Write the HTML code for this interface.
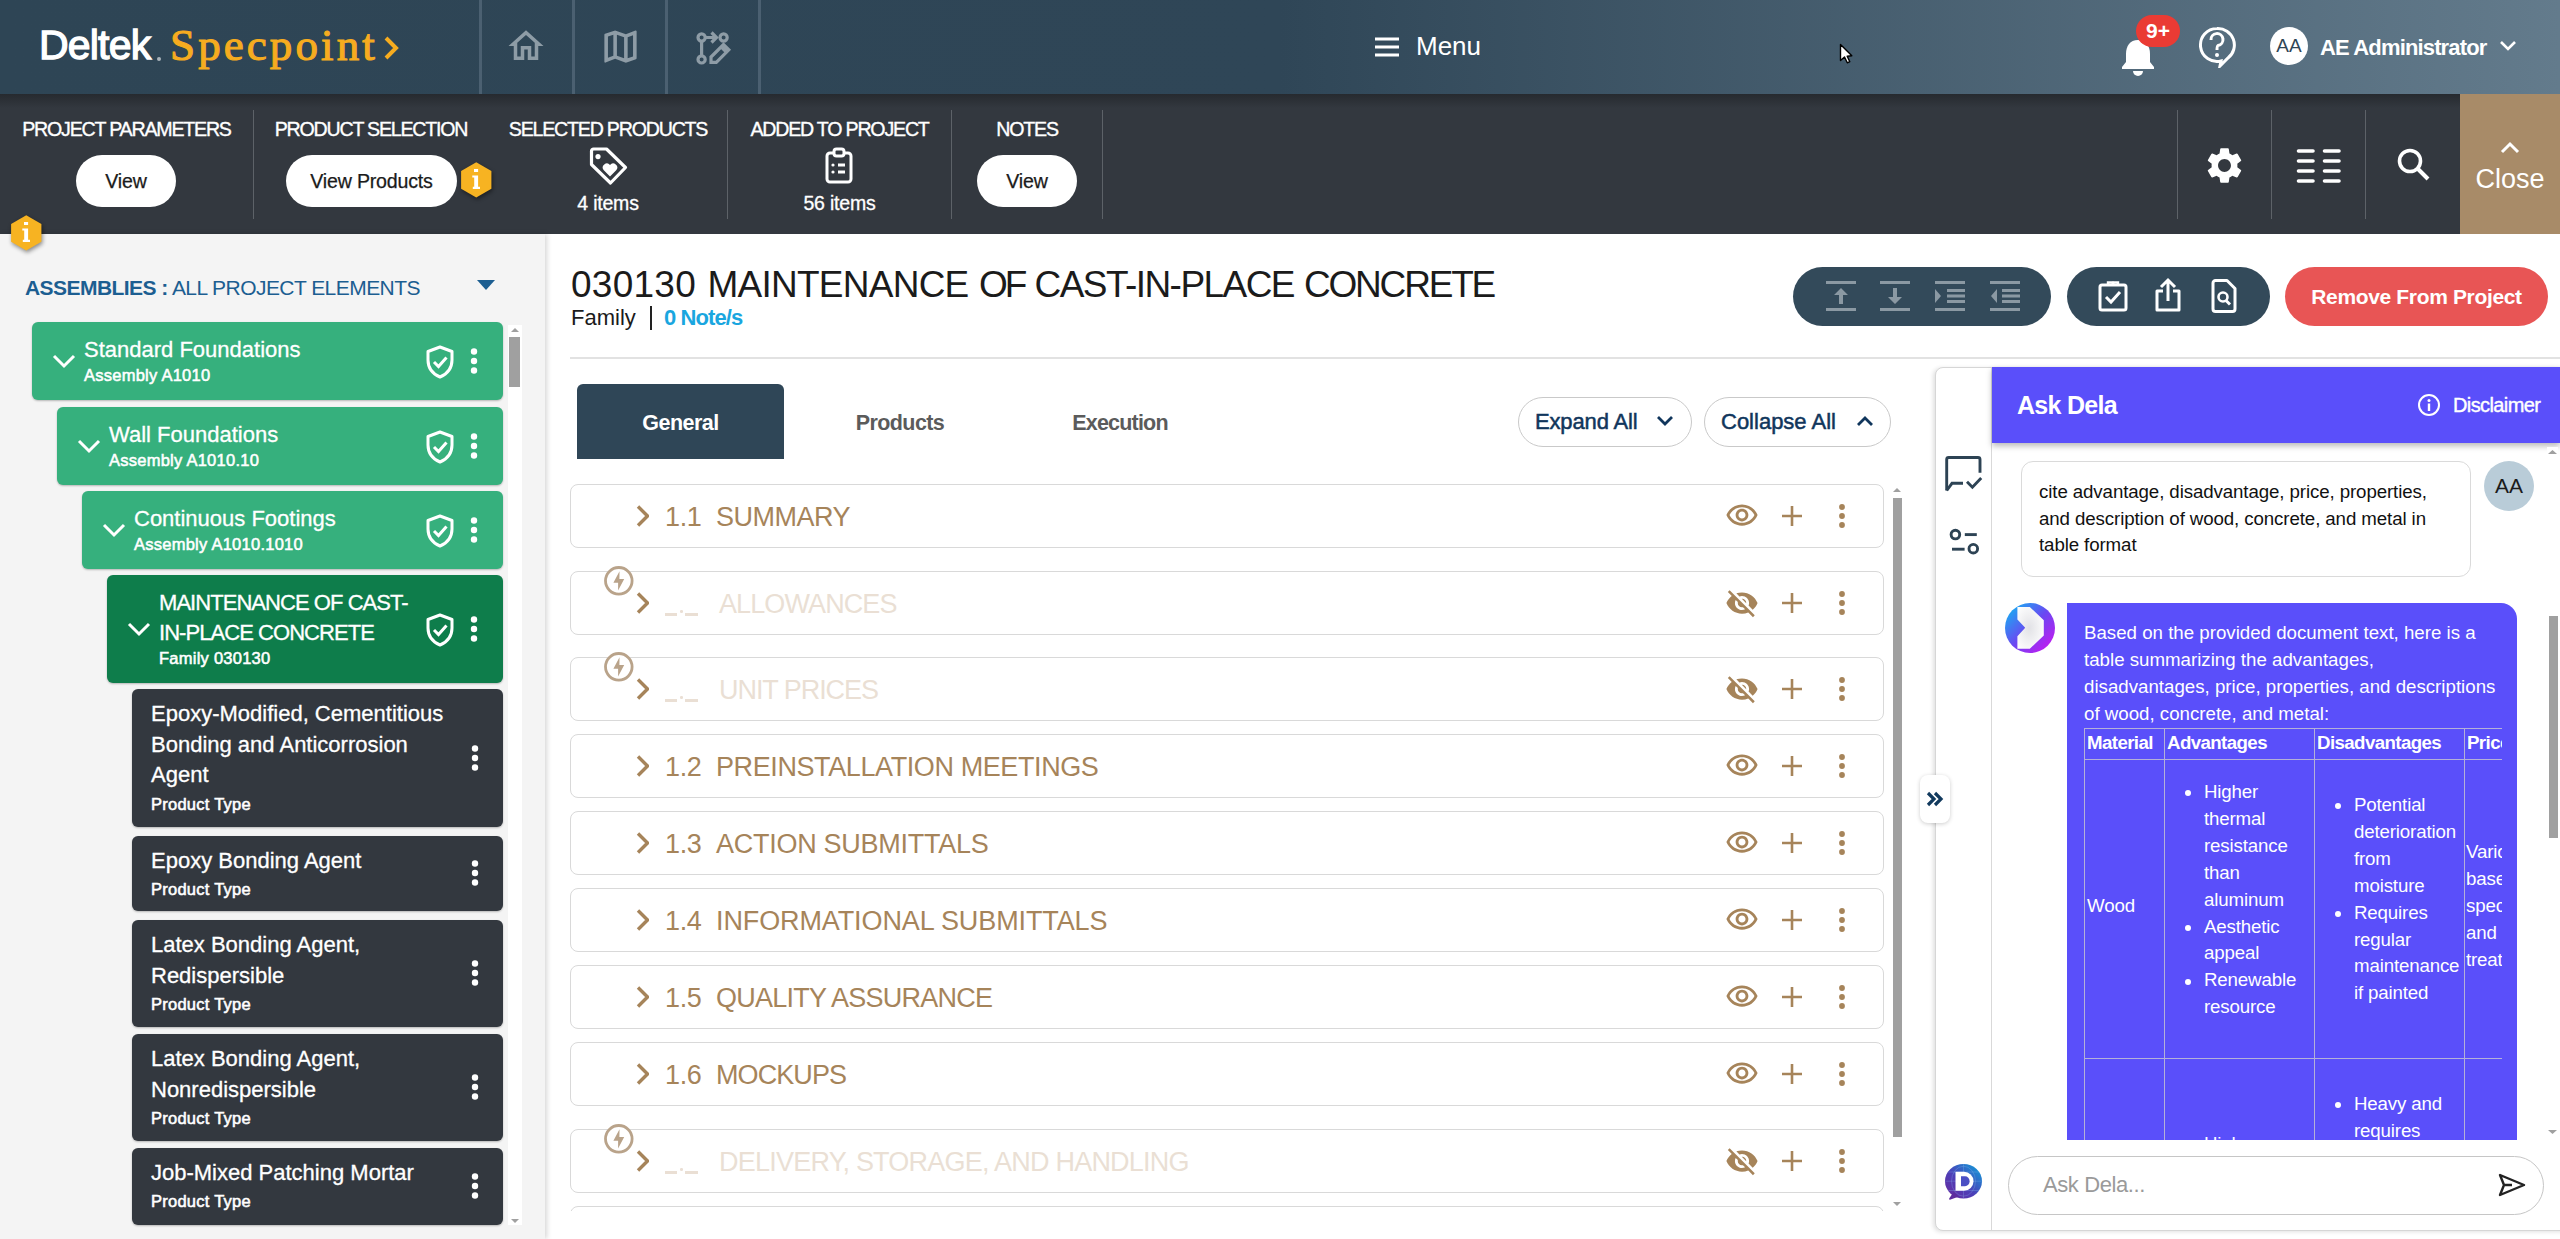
<!DOCTYPE html>
<html><head><meta charset="utf-8">
<style>
*{box-sizing:border-box;margin:0;padding:0}
html,body{width:2560px;height:1239px;overflow:hidden;background:#fff;font-family:"Liberation Sans",sans-serif}
.abs{position:absolute}
#hdr{position:absolute;left:0;top:0;width:2560px;height:94px;background:linear-gradient(90deg,#2e4555 0%,#2f4657 50%,#637b8c 100%)}
#tb{position:absolute;left:0;top:94px;width:2560px;height:140px;background:#33383f}
#tbshadow{position:absolute;left:0;top:94px;width:2460px;height:14px;background:linear-gradient(#262a2f,rgba(51,56,63,0))}
#left{position:absolute;left:0;top:234px;width:545px;height:1005px;background:#f4f4f4;box-shadow:2px 0 5px rgba(0,0,0,.16);z-index:1}
#main{position:absolute;left:545px;top:234px;width:2015px;height:1005px;background:#fff}
.tbl{top:24px;text-align:center;font-size:19.6px;color:#fff;line-height:23px;letter-spacing:-1.2px;-webkit-text-stroke:0.35px #fff}
.tbi{top:98px;text-align:center;font-size:19.5px;color:#fff;line-height:22px;-webkit-text-stroke:0.3px #fff;letter-spacing:-0.2px}
.pill{top:61px;height:52px;border-radius:26px;background:#fff;color:#1b1b1b;font-size:19.6px;text-align:center;line-height:52px;-webkit-text-stroke:0.25px #1b1b1b;letter-spacing:-0.2px}
.vdiv{top:16px;width:1px;height:109px;background:#5d6268}
.card{border-radius:6px;box-shadow:0 1px 2px rgba(0,0,0,.25)}
.ct{font-size:22px;color:#fff;line-height:30px;letter-spacing:0px;-webkit-text-stroke:0.3px #fff}
.ct2{font-size:22px;color:#fff;line-height:30.5px;letter-spacing:0px;-webkit-text-stroke:0.3px #fff}
.cs{font-size:16.5px;color:#fff;line-height:20px;letter-spacing:0.25px;-webkit-text-stroke:0.55px #fff}
.sec{border:1px solid #d9d9d9;border-radius:8px;background:#fff}
.sect{font-size:27px;color:#a6845a;line-height:32px;letter-spacing:-0.38px;white-space:nowrap}
.tab{font-size:21.5px;font-weight:bold;text-align:center;line-height:26px}
.tl{background:#b4b0d8}
.th{font-size:18.7px;font-weight:bold;color:#fff;line-height:26px;letter-spacing:-0.6px;white-space:nowrap}
.td{font-size:18.7px;color:#fff;line-height:26.9px;letter-spacing:-0.15px;white-space:nowrap}
.bul{width:6px;height:6px;border-radius:3px;background:#fff}
.ttl{top:261px;font-size:37px;color:#1b1b1b;line-height:48px;white-space:nowrap}
</style></head>
<body>
<div id="hdr">
 <div class="abs" style="left:39px;top:20px;font-size:41px;color:#fff;letter-spacing:-0.8px;line-height:50px;-webkit-text-stroke:1.3px #fff">Deltek</div>
 <div class="abs" style="left:157px;top:57px;width:4px;height:4px;border-radius:2px;background:#aab4bb"></div>
 <div class="abs" style="left:170px;top:17px;font-family:'Liberation Serif',serif;font-size:45px;color:#f6ac1f;line-height:56px;letter-spacing:3.1px;-webkit-text-stroke:1.1px #f6ac1f">Specpoint</div>
 <svg class="abs" style="left:382px;top:36px" width="18" height="24" viewBox="0 0 18 24"><path d="M4 2 L14 12 L4 22" fill="none" stroke="#f6ac1f" stroke-width="4"/></svg>
 <div class="abs" style="left:479px;top:0;width:2.5px;height:94px;background:#4b6071"></div>
 <div class="abs" style="left:572px;top:0;width:2.5px;height:94px;background:#4b6071"></div>
 <div class="abs" style="left:665px;top:0;width:2.5px;height:94px;background:#4b6071"></div>
 <div class="abs" style="left:758px;top:0;width:2.5px;height:94px;background:#4b6071"></div>
 <svg class="abs" style="left:505px;top:25px" width="42" height="42" viewBox="0 0 24 24"><path fill="#8e9ca6" d="M12 5.69l5 4.5V18h-2v-6H9v6H7v-7.81l5-4.5M12 3L2 12h3v8h6v-6h2v6h6v-8h3L12 3z"/></svg>
 <svg class="abs" style="left:599px;top:25px" width="43" height="43" viewBox="0 0 24 24"><path fill="#8e9ca6" d="M20.5 3l-.16.03L15 5.1 9 3 3.36 4.9c-.21.07-.36.25-.36.48V20.5c0 .28.22.5.5.5l.16-.03L9 18.9l6 2.1 5.640-1.9c.21-.07.36-.25.36-.48V3.5c0-.28-.22-.5-.5-.5zM10 5.47l4 1.4v11.66l-4-1.4V5.47zm-5 .99l3-1.01v11.7l-3 1.16V6.46zm14 11.08l-3 1.01V6.86l3-1.16v11.840z"/></svg>
 <svg class="abs" style="left:690px;top:25px" width="46" height="44" viewBox="0 0 46 44"><g fill="none" stroke="#8e9ca6" stroke-width="3.2"><circle cx="11.6" cy="12.5" r="3.6"/><circle cx="11.6" cy="34.4" r="3.6"/><circle cx="33.6" cy="12.5" r="3.6"/><path d="M11.6 16.2 V30.7 M15.3 12.5 H26 M21.5 7.5 L26.5 12.5 L21.5 17.5"/><path d="M21 37.3 L21 32 L33.5 19.5 L38.8 24.8 L26.3 37.3 Z" stroke-linejoin="miter"/></g><path d="M30 23 L33.5 19.5 L38.8 24.8 L35.3 28.3 Z" fill="#8e9ca6"/></svg>
 <svg class="abs" style="left:1374px;top:37px" width="26" height="20" viewBox="0 0 26 20"><path d="M1 2 H25 M1 10 H25 M1 18 H25" stroke="#fff" stroke-width="3"/></svg>
 <div class="abs" style="left:1416px;top:31px;font-size:26px;color:#fff;line-height:30px">Menu</div>
 <svg class="abs" style="left:1838px;top:42px" width="16" height="24" viewBox="0 0 16 24"><path d="M2.5 2.5 V18.5 L6.5 15 L9.3 20.8 L11.8 19.7 L9.2 14.2 L13.8 13.8 Z" fill="#fff" stroke="#000" stroke-width="1.4" stroke-linejoin="round"/></svg>
 <svg class="abs" style="left:2120px;top:38px" width="36" height="38" viewBox="0 0 36 38"><path d="M18 2 C10 2 6 8 6 16 V24 L2 29 V31 H34 V29 L30 24 V16 C30 8 26 2 18 2 Z" fill="#fff"/><path d="M13 33 A5 5 0 0 0 23 33 Z" fill="#fff"/></svg>
 <div class="abs" style="left:2136px;top:15px;width:44px;height:32px;border-radius:16px;background:#ea3b34;color:#fff;font-size:21px;font-weight:bold;text-align:center;line-height:32px">9+</div>
 <svg class="abs" style="left:2198px;top:26px" width="38" height="42" viewBox="0 0 38 42"><path d="M19 2.5 A16.5 16.5 0 1 0 23 35 L22 40 L30 32 A16.5 16.5 0 0 0 19 2.5 Z" fill="none" stroke="#fff" stroke-width="3"/><path d="M13 14 A6 6 0 1 1 20 19.5 C19 20 19 21 19 24" fill="none" stroke="#fff" stroke-width="3"/><circle cx="19" cy="29" r="2" fill="#fff"/></svg>
 <div class="abs" style="left:2270px;top:27px;width:38px;height:38px;border-radius:19px;background:#fff;color:#2f4656;font-size:19px;text-align:center;line-height:38px">AA</div>
 <div class="abs" style="left:2320px;top:34px;font-size:22px;font-weight:bold;color:#fff;line-height:28px;letter-spacing:-0.85px">AE Administrator</div>
 <svg class="abs" style="left:2499px;top:40px" width="18" height="12" viewBox="0 0 18 12"><path d="M2 2 L9 9 L16 2" fill="none" stroke="#fff" stroke-width="2.6"/></svg>
</div>
<div id="tb">
 <div class="abs tbl" style="left:0;width:253px">PROJECT PARAMETERS</div>
 <div class="abs pill" style="left:76px;width:100px">View</div>
 <div class="abs vdiv" style="left:253px"></div>
 <div class="abs tbl" style="left:254px;width:234px">PRODUCT SELECTION</div>
 <div class="abs pill" style="left:286px;width:171px">View Products</div>
 <svg class="abs" style="left:459px;top:67px;overflow:visible;filter:drop-shadow(1px 2px 2px rgba(0,0,0,.45))" width="35" height="38" viewBox="0 0 35 38"><path d="M17.25 1.3 L32.4 10.05 V27.65 L17.25 36.4 L2.1 27.65 V10.05 Z" fill="#f7b322"/><rect x="15" y="8" width="4.1" height="3" fill="#fff"/><path d="M13.3 14.6 H19.1 V25.7 H21 V28.1 H13.8 V25.7 H15.2 V16.6 H13.3 Z" fill="#fff"/></svg>
 <div class="abs vdiv" style="left:727px"></div>
 <div class="abs tbl" style="left:489px;width:238px">SELECTED PRODUCTS</div>
 <svg class="abs" style="left:588px;top:51px" width="42" height="42" viewBox="0 0 42 42"><path d="M3.5 6 A2 2 0 0 1 5.5 4 H18.5 L37.5 22.5 L22.5 38 L3.5 19.5 Z" fill="none" stroke="#fff" stroke-width="3.2" stroke-linejoin="round"/><circle cx="10" cy="11.6" r="2.6" fill="#fff"/><path d="M22 31.5 L15.8 25.3 A3.7 3.7 0 0 1 22 20 A3.7 3.7 0 0 1 28.2 25.3 Z" fill="#fff"/></svg>
 <div class="abs tbi" style="left:489px;width:238px">4 items</div>
 <div class="abs tbl" style="left:728px;width:223px">ADDED TO PROJECT</div>
 <svg class="abs" style="left:824px;top:53px" width="30" height="38" viewBox="0 0 30 38"><rect x="3" y="6" width="24" height="29" rx="3" fill="none" stroke="#fff" stroke-width="3"/><rect x="10" y="2" width="10" height="7" rx="2.5" fill="#33383f" stroke="#fff" stroke-width="3"/><circle cx="9" cy="18" r="1.6" fill="#fff"/><circle cx="9" cy="25" r="1.6" fill="#fff"/><path d="M14 18 H21 M14 25 H21" stroke="#fff" stroke-width="3"/></svg>
 <div class="abs tbi" style="left:728px;width:223px">56 items</div>
 <div class="abs vdiv" style="left:951px"></div>
 <div class="abs tbl" style="left:952px;width:150px">NOTES</div>
 <div class="abs pill" style="left:977px;width:100px">View</div>
 <div class="abs vdiv" style="left:1102px"></div>
 <div class="abs vdiv" style="left:2177px"></div>
 <div class="abs vdiv" style="left:2271px"></div>
 <div class="abs vdiv" style="left:2365px"></div>
 <svg class="abs" style="left:2203px;top:50px" width="43" height="43" viewBox="0 0 24 24"><path fill="#fff" d="M19.14 12.94c.04-.3.06-.61.06-.94 0-.32-.02-.64-.07-.94l2.03-1.58a.49.49 0 0 0 .12-.61l-1.92-3.32a.49.49 0 0 0-.59-.22l-2.39.96c-.5-.38-1.03-.7-1.62-.94l-.36-2.54a.48.48 0 0 0-.48-.41h-3.84c-.24 0-.43.17-.47.41l-.36 2.54c-.59.24-1.13.57-1.62.94l-2.39-.96a.49.49 0 0 0-.59.22L2.74 8.87c-.12.21-.08.47.12.61l2.03 1.58c-.05.3-.09.63-.09.94s.02.64.07.94l-2.03 1.58a.49.49 0 0 0-.12.61l1.92 3.32c.12.22.37.29.59.22l2.39-.96c.5.38 1.03.7 1.62.94l.36 2.54c.05.24.24.41.48.41h3.84c.24 0 .44-.17.47-.41l.36-2.54c.59-.24 1.13-.56 1.62-.94l2.39.96c.22.08.47 0 .59-.22l1.92-3.32c.12-.22.07-.47-.12-.61l-2.01-1.58zM12 15.6c-1.98 0-3.6-1.62-3.6-3.6s1.62-3.6 3.6-3.6 3.6 1.62 3.6 3.6-1.62 3.6-3.6 3.6z"/></svg>
 <svg class="abs" style="left:2295px;top:54px" width="48" height="38" viewBox="0 0 48 38"><g stroke="#fff" stroke-width="3.6" stroke-linecap="round"><path d="M3.5 3 H18 M3.5 13 H18 M3.5 23 H18 M3.5 33 H18 M29.5 3 H44 M29.5 13 H44 M29.5 23 H44 M29.5 33 H44"/></g></svg>
 <svg class="abs" style="left:2396px;top:53px" width="36" height="36" viewBox="0 0 36 36"><circle cx="14" cy="14" r="10.5" fill="none" stroke="#fff" stroke-width="3.6"/><path d="M21.5 21.5 L32 32" stroke="#fff" stroke-width="4"/></svg>
 <div class="abs" style="left:2460px;top:0;width:100px;height:140px;background:#a88b68"></div>
 <svg class="abs" style="left:2499px;top:47px" width="22" height="14" viewBox="0 0 22 14"><path d="M3 11 L11 3 L19 11" fill="none" stroke="#fff" stroke-width="3"/></svg>
 <div class="abs" style="left:2460px;top:69px;width:100px;text-align:center;font-size:27px;color:#fff;line-height:32px">Close</div>
</div>
<div id="tbshadow"></div>
<div id="left">
 <svg class="abs" style="left:9px;top:-20px;overflow:visible;filter:drop-shadow(1px 2px 2px rgba(0,0,0,.45))" width="35" height="38" viewBox="0 0 35 38"><path d="M17.25 1.3 L32.4 10.05 V27.65 L17.25 36.4 L2.1 27.65 V10.05 Z" fill="#f7b322"/><rect x="15" y="8" width="4.1" height="3" fill="#fff"/><path d="M13.3 14.6 H19.1 V25.7 H21 V28.1 H13.8 V25.7 H15.2 V16.6 H13.3 Z" fill="#fff"/></svg>
 <div class="abs" style="left:25px;top:42px;font-size:21px;color:#1c5e91;line-height:24px;letter-spacing:-0.55px"><b>ASSEMBLIES :</b> ALL PROJECT ELEMENTS</div>
 <svg class="abs" style="left:477px;top:46px" width="18" height="11" viewBox="0 0 18 11"><path d="M0 0 H18 L9 10 Z" fill="#1c5e91"/></svg>
 <div class="abs" style="left:508px;top:91px;width:14px;height:900px;background:#fff"></div>
 <svg class="abs" style="left:510px;top:93px" width="10" height="6" viewBox="0 0 10 6"><path d="M1 5 L5 1 L9 5Z" fill="#a0a0a0"/></svg>
 <div class="abs" style="left:509px;top:103px;width:11px;height:50px;background:#a0a0a0"></div>
 <svg class="abs" style="left:510px;top:984px" width="10" height="6" viewBox="0 0 10 6"><path d="M1 1 L5 5 L9 1Z" fill="#a0a0a0"/></svg>
<div class="abs card" style="left:32px;top:88px;width:471px;height:78px;background:#36b07d"><svg class="abs" style="left:19px;top:31px" width="26" height="16" viewBox="0 0 26 16"><path d="M3 3 L13 13 L23 3" fill="none" stroke="#fff" stroke-width="3"/></svg><div class="abs ct" style="left:52px;top:13px">Standard Foundations</div><div class="abs cs" style="left:52px;top:43px">Assembly A1010</div><svg class="abs" style="left:393px;top:23px" width="30" height="34" viewBox="0 0 30 34"><path d="M15 2 L27 6.5 V15 C27 23 22 29 15 32 C8 29 3 23 3 15 V6.5 Z" fill="none" stroke="#fff" stroke-width="3" stroke-linejoin="round"/><path d="M9 17 L13.5 21.5 L21.5 12.5" fill="none" stroke="#fff" stroke-width="3"/></svg><svg class="abs" style="left:438px;top:26px" width="8" height="26" viewBox="0 0 8 26"><circle cx="4" cy="3.5" r="3.2" fill="#fff"/><circle cx="4" cy="13" r="3.2" fill="#fff"/><circle cx="4" cy="22.5" r="3.2" fill="#fff"/></svg></div><div class="abs card" style="left:57px;top:173px;width:446px;height:78px;background:#36b07d"><svg class="abs" style="left:19px;top:31px" width="26" height="16" viewBox="0 0 26 16"><path d="M3 3 L13 13 L23 3" fill="none" stroke="#fff" stroke-width="3"/></svg><div class="abs ct" style="left:52px;top:13px">Wall Foundations</div><div class="abs cs" style="left:52px;top:43px">Assembly A1010.10</div><svg class="abs" style="left:368px;top:23px" width="30" height="34" viewBox="0 0 30 34"><path d="M15 2 L27 6.5 V15 C27 23 22 29 15 32 C8 29 3 23 3 15 V6.5 Z" fill="none" stroke="#fff" stroke-width="3" stroke-linejoin="round"/><path d="M9 17 L13.5 21.5 L21.5 12.5" fill="none" stroke="#fff" stroke-width="3"/></svg><svg class="abs" style="left:413px;top:26px" width="8" height="26" viewBox="0 0 8 26"><circle cx="4" cy="3.5" r="3.2" fill="#fff"/><circle cx="4" cy="13" r="3.2" fill="#fff"/><circle cx="4" cy="22.5" r="3.2" fill="#fff"/></svg></div><div class="abs card" style="left:82px;top:257px;width:421px;height:78px;background:#36b07d"><svg class="abs" style="left:19px;top:31px" width="26" height="16" viewBox="0 0 26 16"><path d="M3 3 L13 13 L23 3" fill="none" stroke="#fff" stroke-width="3"/></svg><div class="abs ct" style="left:52px;top:13px">Continuous Footings</div><div class="abs cs" style="left:52px;top:43px">Assembly A1010.1010</div><svg class="abs" style="left:343px;top:23px" width="30" height="34" viewBox="0 0 30 34"><path d="M15 2 L27 6.5 V15 C27 23 22 29 15 32 C8 29 3 23 3 15 V6.5 Z" fill="none" stroke="#fff" stroke-width="3" stroke-linejoin="round"/><path d="M9 17 L13.5 21.5 L21.5 12.5" fill="none" stroke="#fff" stroke-width="3"/></svg><svg class="abs" style="left:388px;top:26px" width="8" height="26" viewBox="0 0 8 26"><circle cx="4" cy="3.5" r="3.2" fill="#fff"/><circle cx="4" cy="13" r="3.2" fill="#fff"/><circle cx="4" cy="22.5" r="3.2" fill="#fff"/></svg></div><div class="abs card" style="left:107px;top:341px;width:396px;height:108px;background:#0e7d4b"><svg class="abs" style="left:19px;top:46px" width="26" height="16" viewBox="0 0 26 16"><path d="M3 3 L13 13 L23 3" fill="none" stroke="#fff" stroke-width="3"/></svg><div class="abs ct" style="left:52px;top:13px"><span style="letter-spacing:-0.95px">MAINTENANCE OF CAST-<br>IN-PLACE CONCRETE</span></div><div class="abs cs" style="left:52px;top:73px">Family 030130</div><svg class="abs" style="left:318px;top:38px" width="30" height="34" viewBox="0 0 30 34"><path d="M15 2 L27 6.5 V15 C27 23 22 29 15 32 C8 29 3 23 3 15 V6.5 Z" fill="none" stroke="#fff" stroke-width="3" stroke-linejoin="round"/><path d="M9 17 L13.5 21.5 L21.5 12.5" fill="none" stroke="#fff" stroke-width="3"/></svg><svg class="abs" style="left:363px;top:41px" width="8" height="26" viewBox="0 0 8 26"><circle cx="4" cy="3.5" r="3.2" fill="#fff"/><circle cx="4" cy="13" r="3.2" fill="#fff"/><circle cx="4" cy="22.5" r="3.2" fill="#fff"/></svg></div><div class="abs card" style="left:132px;top:455px;width:371px;height:138px;background:#33383f"><div class="abs ct2" style="left:19px;top:10px;width:320px">Epoxy-Modified, Cementitious<br>Bonding and Anticorrosion<br>Agent</div><div class="abs cs" style="left:19px;top:105px">Product Type</div><svg class="abs" style="left:339px;top:56px" width="8" height="26" viewBox="0 0 8 26"><circle cx="4" cy="3.5" r="3.2" fill="#fff"/><circle cx="4" cy="13" r="3.2" fill="#fff"/><circle cx="4" cy="22.5" r="3.2" fill="#fff"/></svg></div><div class="abs card" style="left:132px;top:602px;width:371px;height:75px;background:#33383f"><div class="abs ct2" style="left:19px;top:10px;width:320px">Epoxy Bonding Agent</div><div class="abs cs" style="left:19px;top:43px">Product Type</div><svg class="abs" style="left:339px;top:24px" width="8" height="26" viewBox="0 0 8 26"><circle cx="4" cy="3.5" r="3.2" fill="#fff"/><circle cx="4" cy="13" r="3.2" fill="#fff"/><circle cx="4" cy="22.5" r="3.2" fill="#fff"/></svg></div><div class="abs card" style="left:132px;top:686px;width:371px;height:107px;background:#33383f"><div class="abs ct2" style="left:19px;top:10px;width:320px">Latex Bonding Agent,<br>Redispersible</div><div class="abs cs" style="left:19px;top:74px">Product Type</div><svg class="abs" style="left:339px;top:40px" width="8" height="26" viewBox="0 0 8 26"><circle cx="4" cy="3.5" r="3.2" fill="#fff"/><circle cx="4" cy="13" r="3.2" fill="#fff"/><circle cx="4" cy="22.5" r="3.2" fill="#fff"/></svg></div><div class="abs card" style="left:132px;top:800px;width:371px;height:107px;background:#33383f"><div class="abs ct2" style="left:19px;top:10px;width:320px">Latex Bonding Agent,<br>Nonredispersible</div><div class="abs cs" style="left:19px;top:74px">Product Type</div><svg class="abs" style="left:339px;top:40px" width="8" height="26" viewBox="0 0 8 26"><circle cx="4" cy="3.5" r="3.2" fill="#fff"/><circle cx="4" cy="13" r="3.2" fill="#fff"/><circle cx="4" cy="22.5" r="3.2" fill="#fff"/></svg></div><div class="abs card" style="left:132px;top:914px;width:371px;height:77px;background:#33383f"><div class="abs ct2" style="left:19px;top:10px;width:320px">Job-Mixed Patching Mortar</div><div class="abs cs" style="left:19px;top:43px">Product Type</div><svg class="abs" style="left:339px;top:25px" width="8" height="26" viewBox="0 0 8 26"><circle cx="4" cy="3.5" r="3.2" fill="#fff"/><circle cx="4" cy="13" r="3.2" fill="#fff"/><circle cx="4" cy="22.5" r="3.2" fill="#fff"/></svg></div></div>
<div id="main"></div>
<div id="mainc">
 <div class="abs ttl" style="left:571px;letter-spacing:0.25px">030130</div><div class="abs ttl" style="left:707.5px;letter-spacing:-0.75px">MAINTENANCE</div><div class="abs ttl" style="left:979px;letter-spacing:-3px">OF</div><div class="abs ttl" style="left:1034.5px;letter-spacing:-1.55px">CAST-IN-PLACE</div><div class="abs ttl" style="left:1304px;letter-spacing:-2.2px">CONCRETE</div>
 <div class="abs" style="left:571px;top:305px;font-size:22px;color:#1b1b1b;line-height:26px">Family</div>
 <div class="abs" style="left:650px;top:306px;width:1.5px;height:24px;background:#222"></div>
 <div class="abs" style="left:664px;top:305px;font-size:22px;font-weight:bold;color:#1aa6df;line-height:26px;letter-spacing:-0.9px">0 Note/s</div>
 <div class="abs" style="left:570px;top:357px;width:1990px;height:2px;background:#e2e2e2"></div>
 <div class="abs" style="left:1793px;top:267px;width:258px;height:59px;border-radius:30px;background:#334a5a"></div>
 <div class="abs" style="left:2067px;top:267px;width:203px;height:59px;border-radius:30px;background:#334a5a"></div>
 <div class="abs" style="left:2285px;top:267px;width:263px;height:59px;border-radius:30px;background:#e85555;color:#fff;font-size:21px;font-weight:bold;text-align:center;line-height:59px;letter-spacing:-0.35px">Remove From Project</div>
 <svg class="abs" style="left:1825px;top:280px" width="32" height="32" viewBox="0 0 32 32"><g fill="#8b99a3"><rect x="1" y="1" width="30" height="3"/><rect x="1" y="28" width="30" height="3"/><path d="M16 8 L23 15 H18 V24 H14 V15 H9 Z"/></g></svg>
 <svg class="abs" style="left:1879px;top:280px" width="32" height="32" viewBox="0 0 32 32"><g fill="#8b99a3"><rect x="1" y="1" width="30" height="3"/><rect x="1" y="28" width="30" height="3"/><path d="M16 24 L23 17 H18 V8 H14 V17 H9 Z"/></g></svg>
 <svg class="abs" style="left:1934px;top:280px" width="32" height="32" viewBox="0 0 32 32"><g fill="#8b99a3"><rect x="1" y="1" width="30" height="3"/><rect x="1" y="28" width="30" height="3"/><rect x="13" y="9" width="18" height="3"/><rect x="13" y="14.5" width="18" height="3"/><rect x="13" y="20" width="18" height="3"/><path d="M1 9 L7 16 L1 23 Z"/></g></svg>
 <svg class="abs" style="left:1989px;top:280px" width="32" height="32" viewBox="0 0 32 32"><g fill="#8b99a3"><rect x="1" y="1" width="30" height="3"/><rect x="1" y="28" width="30" height="3"/><rect x="13" y="9" width="18" height="3"/><rect x="13" y="14.5" width="18" height="3"/><rect x="13" y="20" width="18" height="3"/><path d="M8 9 L2 16 L8 23 Z"/></g></svg>
 <svg class="abs" style="left:2098px;top:280px" width="30" height="32" viewBox="0 0 30 32"><rect x="2" y="5" width="26" height="25" rx="2" fill="none" stroke="#fff" stroke-width="3"/><path d="M10 5 V2.5 H20 V5" fill="none" stroke="#fff" stroke-width="2.4"/><circle cx="15" cy="3" r="1.6" fill="#fff"/><path d="M8 17 L13 22 L22 12" fill="none" stroke="#fff" stroke-width="3"/></svg>
 <svg class="abs" style="left:2154px;top:277px" width="28" height="35" viewBox="0 0 28 35"><path d="M9 14 H3 V33 H25 V14 H19" fill="none" stroke="#fff" stroke-width="3" stroke-linejoin="round"/><path d="M14 24 V3 M7 10 L14 3 L21 10" fill="none" stroke="#fff" stroke-width="3"/></svg>
 <svg class="abs" style="left:2210px;top:279px" width="28" height="34" viewBox="0 0 28 34"><path d="M3 4 A2.5 2.5 0 0 1 5.5 1.5 H17 L25 9.5 V30 A2.5 2.5 0 0 1 22.5 32.5 H5.5 A2.5 2.5 0 0 1 3 30 Z" fill="none" stroke="#fff" stroke-width="3" stroke-linejoin="round"/><circle cx="13" cy="18" r="4.5" fill="none" stroke="#fff" stroke-width="2.6"/><path d="M16 21.5 L20 25.5" stroke="#fff" stroke-width="3"/></svg>
 <div class="abs" style="left:577px;top:384px;width:207px;height:75px;border-radius:6px 6px 0 0;background:#2f4657"></div>
 <div class="abs tab" style="left:577px;top:410px;width:207px;color:#fff;letter-spacing:-0.5px">General</div>
 <div class="abs tab" style="left:800px;top:410px;width:200px;color:#5b5b5b;letter-spacing:-0.6px">Products</div>
 <div class="abs tab" style="left:1020px;top:410px;width:200px;color:#5b5b5b;letter-spacing:-0.8px">Execution</div>
 <div class="abs" style="left:1518px;top:397px;width:174px;height:50px;border-radius:25px;border:1px solid #c9c9c9"></div>
 <div class="abs" style="left:1535px;top:409px;font-size:22px;color:#10365c;line-height:26px;letter-spacing:-0.15px;-webkit-text-stroke:0.5px #10365c">Expand All</div>
 <svg class="abs" style="left:1656px;top:415px" width="18" height="12" viewBox="0 0 18 12"><path d="M2 2 L9 9 L16 2" fill="none" stroke="#10365c" stroke-width="2.8"/></svg>
 <div class="abs" style="left:1704px;top:397px;width:187px;height:50px;border-radius:25px;border:1px solid #c9c9c9"></div>
 <div class="abs" style="left:1721px;top:409px;font-size:22px;color:#10365c;line-height:26px;letter-spacing:0px;-webkit-text-stroke:0.5px #10365c">Collapse All</div>
 <svg class="abs" style="left:1856px;top:415px" width="18" height="12" viewBox="0 0 18 12"><path d="M2 10 L9 3 L16 10" fill="none" stroke="#10365c" stroke-width="2.8"/></svg>
<div class="abs" style="left:0;top:0;width:1920px;height:1211px;overflow:hidden"><div class="abs sec" style="left:570px;top:484px;width:1314px;height:64px"></div><svg class="abs" style="left:635px;top:504px" width="14" height="24" viewBox="0 0 14 24"><path d="M3 2.5 L12.5 12 L3 21.5" fill="none" stroke="#a6845a" stroke-width="3.4"/></svg><div class="abs sect" style="left:665px;top:501px">1.1</div><div class="abs sect" style="left:716px;top:501px;letter-spacing:-0.50px">SUMMARY</div><svg class="abs" style="left:1725px;top:498px" width="34" height="34" viewBox="0 0 24 24"><path fill="#a6845a" d="M12 6.5c3.79 0 7.17 2.13 8.82 5.5-1.65 3.37-5.02 5.5-8.82 5.5S4.83 15.37 3.18 12C4.830 8.63 8.21 6.5 12 6.5m0-2C7 4.5 2.73 7.61 1 12c1.73 4.39 6 7.5 11 7.5s9.27-3.11 11-7.5c-1.73-4.39-6-7.5-11-7.5zm0 5c1.38 0 2.5 1.12 2.5 2.5s-1.12 2.5-2.5 2.5-2.5-1.12-2.5-2.5 1.12-2.5 2.5-2.5m0-2c-2.48 0-4.5 2.02-4.5 4.5s2.02 4.5 4.5 4.5 4.5-2.02 4.5-4.5-2.02-4.5-4.5-4.5z"/></svg><svg class="abs" style="left:1781px;top:505px" width="22" height="22" viewBox="0 0 22 22"><path d="M11 1 V21 M1 11 H21" stroke="#a6845a" stroke-width="2.6"/></svg><svg class="abs" style="left:1838px;top:504px" width="8" height="24" viewBox="0 0 8 24"><circle cx="4" cy="3" r="2.9" fill="#a6845a"/><circle cx="4" cy="12" r="2.9" fill="#a6845a"/><circle cx="4" cy="21" r="2.9" fill="#a6845a"/></svg><div class="abs sec" style="left:570px;top:571px;width:1314px;height:64px"></div><svg class="abs" style="left:635px;top:591px" width="14" height="24" viewBox="0 0 14 24"><path d="M3 2.5 L12.5 12 L3 21.5" fill="none" stroke="#a6845a" stroke-width="3.4"/></svg><div class="abs" style="left:665px;top:613px;width:12px;height:2.5px;background:#eadfd4"></div><div class="abs" style="left:680px;top:610px;width:2.6px;height:2.6px;border-radius:1.3px;background:#eadfd4"></div><div class="abs" style="left:685px;top:613px;width:13px;height:2.5px;background:#eadfd4"></div><div class="abs sect" style="left:719px;top:588px;color:#eadfd4;letter-spacing:-0.90px">ALLOWANCES</div><svg class="abs" style="left:603px;top:564px" width="32" height="32" viewBox="0 0 32 32"><circle cx="15.8" cy="16.8" r="13.3" fill="#fff" stroke="#b9a38a" stroke-width="2.8"/><path d="M16.5 7.2 L10.4 18.8 H15.1 V26.4 L21.2 15.1 H16.4 Z" fill="#b9a38a"/></svg><svg class="abs" style="left:1725px;top:586px" width="34" height="34" viewBox="0 0 24 24"><path fill="#a6845a" d="M12 7c2.76 0 5 2.24 5 5 0 .65-.13 1.26-.36 1.83l2.92 2.920c1.51-1.26 2.7-2.89 3.43-4.75-1.73-4.39-6-7.5-11-7.5-1.4 0-2.74.25-3.98.7l2.160 2.160C10.74 7.13 11.35 7 12 7zM2 4.27l2.28 2.280.46.46C3.08 8.3 1.78 10.02 1 12c1.73 4.39 6 7.5 11 7.5 1.55 0 3.03-.3 4.38-.84l.42.42L19.73 22 21 20.73 3.27 3 2 4.27zM7.53 9.8l1.55 1.55c-.05.21-.08.43-.08.65 0 1.66 1.34 3 3 3 .22 0 .44-.03.65-.08l1.55 1.55c-.67.33-1.41.53-2.2.53-2.76 0-5-2.240-5-5 0-.79.2-1.53.53-2.2zm4.31-.78l3.15 3.15.02-.16c0-1.66-1.34-3-3-3l-.17.01z"/></svg><svg class="abs" style="left:1781px;top:592px" width="22" height="22" viewBox="0 0 22 22"><path d="M11 1 V21 M1 11 H21" stroke="#a6845a" stroke-width="2.6"/></svg><svg class="abs" style="left:1838px;top:591px" width="8" height="24" viewBox="0 0 8 24"><circle cx="4" cy="3" r="2.9" fill="#a6845a"/><circle cx="4" cy="12" r="2.9" fill="#a6845a"/><circle cx="4" cy="21" r="2.9" fill="#a6845a"/></svg><div class="abs sec" style="left:570px;top:657px;width:1314px;height:64px"></div><svg class="abs" style="left:635px;top:677px" width="14" height="24" viewBox="0 0 14 24"><path d="M3 2.5 L12.5 12 L3 21.5" fill="none" stroke="#a6845a" stroke-width="3.4"/></svg><div class="abs" style="left:665px;top:699px;width:12px;height:2.5px;background:#eadfd4"></div><div class="abs" style="left:680px;top:696px;width:2.6px;height:2.6px;border-radius:1.3px;background:#eadfd4"></div><div class="abs" style="left:685px;top:699px;width:13px;height:2.5px;background:#eadfd4"></div><div class="abs sect" style="left:719px;top:674px;color:#eadfd4;letter-spacing:-1.05px">UNIT PRICES</div><svg class="abs" style="left:603px;top:650px" width="32" height="32" viewBox="0 0 32 32"><circle cx="15.8" cy="16.8" r="13.3" fill="#fff" stroke="#b9a38a" stroke-width="2.8"/><path d="M16.5 7.2 L10.4 18.8 H15.1 V26.4 L21.2 15.1 H16.4 Z" fill="#b9a38a"/></svg><svg class="abs" style="left:1725px;top:672px" width="34" height="34" viewBox="0 0 24 24"><path fill="#a6845a" d="M12 7c2.76 0 5 2.24 5 5 0 .65-.13 1.26-.36 1.83l2.92 2.920c1.51-1.26 2.7-2.89 3.43-4.75-1.73-4.39-6-7.5-11-7.5-1.4 0-2.74.25-3.98.7l2.160 2.160C10.74 7.13 11.35 7 12 7zM2 4.27l2.28 2.280.46.46C3.08 8.3 1.78 10.02 1 12c1.73 4.39 6 7.5 11 7.5 1.55 0 3.03-.3 4.38-.84l.42.42L19.73 22 21 20.73 3.27 3 2 4.27zM7.53 9.8l1.55 1.55c-.05.21-.08.43-.08.65 0 1.66 1.34 3 3 3 .22 0 .44-.03.65-.08l1.55 1.55c-.67.33-1.41.53-2.2.53-2.76 0-5-2.240-5-5 0-.79.2-1.53.53-2.2zm4.31-.78l3.15 3.15.02-.16c0-1.66-1.34-3-3-3l-.17.01z"/></svg><svg class="abs" style="left:1781px;top:678px" width="22" height="22" viewBox="0 0 22 22"><path d="M11 1 V21 M1 11 H21" stroke="#a6845a" stroke-width="2.6"/></svg><svg class="abs" style="left:1838px;top:677px" width="8" height="24" viewBox="0 0 8 24"><circle cx="4" cy="3" r="2.9" fill="#a6845a"/><circle cx="4" cy="12" r="2.9" fill="#a6845a"/><circle cx="4" cy="21" r="2.9" fill="#a6845a"/></svg><div class="abs sec" style="left:570px;top:734px;width:1314px;height:64px"></div><svg class="abs" style="left:635px;top:754px" width="14" height="24" viewBox="0 0 14 24"><path d="M3 2.5 L12.5 12 L3 21.5" fill="none" stroke="#a6845a" stroke-width="3.4"/></svg><div class="abs sect" style="left:665px;top:751px">1.2</div><div class="abs sect" style="left:716px;top:751px;letter-spacing:-0.40px">PREINSTALLATION MEETINGS</div><svg class="abs" style="left:1725px;top:748px" width="34" height="34" viewBox="0 0 24 24"><path fill="#a6845a" d="M12 6.5c3.79 0 7.17 2.13 8.82 5.5-1.65 3.37-5.02 5.5-8.82 5.5S4.83 15.37 3.18 12C4.830 8.63 8.21 6.5 12 6.5m0-2C7 4.5 2.73 7.61 1 12c1.73 4.39 6 7.5 11 7.5s9.27-3.11 11-7.5c-1.73-4.39-6-7.5-11-7.5zm0 5c1.38 0 2.5 1.12 2.5 2.5s-1.12 2.5-2.5 2.5-2.5-1.12-2.5-2.5 1.12-2.5 2.5-2.5m0-2c-2.48 0-4.5 2.02-4.5 4.5s2.02 4.5 4.5 4.5 4.5-2.02 4.5-4.5-2.02-4.5-4.5-4.5z"/></svg><svg class="abs" style="left:1781px;top:755px" width="22" height="22" viewBox="0 0 22 22"><path d="M11 1 V21 M1 11 H21" stroke="#a6845a" stroke-width="2.6"/></svg><svg class="abs" style="left:1838px;top:754px" width="8" height="24" viewBox="0 0 8 24"><circle cx="4" cy="3" r="2.9" fill="#a6845a"/><circle cx="4" cy="12" r="2.9" fill="#a6845a"/><circle cx="4" cy="21" r="2.9" fill="#a6845a"/></svg><div class="abs sec" style="left:570px;top:811px;width:1314px;height:64px"></div><svg class="abs" style="left:635px;top:831px" width="14" height="24" viewBox="0 0 14 24"><path d="M3 2.5 L12.5 12 L3 21.5" fill="none" stroke="#a6845a" stroke-width="3.4"/></svg><div class="abs sect" style="left:665px;top:828px">1.3</div><div class="abs sect" style="left:716px;top:828px;letter-spacing:-0.27px">ACTION SUBMITTALS</div><svg class="abs" style="left:1725px;top:825px" width="34" height="34" viewBox="0 0 24 24"><path fill="#a6845a" d="M12 6.5c3.79 0 7.17 2.13 8.82 5.5-1.65 3.37-5.02 5.5-8.82 5.5S4.83 15.37 3.18 12C4.830 8.63 8.21 6.5 12 6.5m0-2C7 4.5 2.73 7.61 1 12c1.73 4.39 6 7.5 11 7.5s9.27-3.11 11-7.5c-1.73-4.39-6-7.5-11-7.5zm0 5c1.38 0 2.5 1.12 2.5 2.5s-1.12 2.5-2.5 2.5-2.5-1.12-2.5-2.5 1.12-2.5 2.5-2.5m0-2c-2.48 0-4.5 2.02-4.5 4.5s2.02 4.5 4.5 4.5 4.5-2.02 4.5-4.5-2.02-4.5-4.5-4.5z"/></svg><svg class="abs" style="left:1781px;top:832px" width="22" height="22" viewBox="0 0 22 22"><path d="M11 1 V21 M1 11 H21" stroke="#a6845a" stroke-width="2.6"/></svg><svg class="abs" style="left:1838px;top:831px" width="8" height="24" viewBox="0 0 8 24"><circle cx="4" cy="3" r="2.9" fill="#a6845a"/><circle cx="4" cy="12" r="2.9" fill="#a6845a"/><circle cx="4" cy="21" r="2.9" fill="#a6845a"/></svg><div class="abs sec" style="left:570px;top:888px;width:1314px;height:64px"></div><svg class="abs" style="left:635px;top:908px" width="14" height="24" viewBox="0 0 14 24"><path d="M3 2.5 L12.5 12 L3 21.5" fill="none" stroke="#a6845a" stroke-width="3.4"/></svg><div class="abs sect" style="left:665px;top:905px">1.4</div><div class="abs sect" style="left:716px;top:905px;letter-spacing:-0.11px">INFORMATIONAL SUBMITTALS</div><svg class="abs" style="left:1725px;top:902px" width="34" height="34" viewBox="0 0 24 24"><path fill="#a6845a" d="M12 6.5c3.79 0 7.17 2.13 8.82 5.5-1.65 3.37-5.02 5.5-8.82 5.5S4.83 15.37 3.18 12C4.830 8.63 8.21 6.5 12 6.5m0-2C7 4.5 2.73 7.61 1 12c1.73 4.39 6 7.5 11 7.5s9.27-3.11 11-7.5c-1.73-4.39-6-7.5-11-7.5zm0 5c1.38 0 2.5 1.12 2.5 2.5s-1.12 2.5-2.5 2.5-2.5-1.12-2.5-2.5 1.12-2.5 2.5-2.5m0-2c-2.48 0-4.5 2.02-4.5 4.5s2.02 4.5 4.5 4.5 4.5-2.02 4.5-4.5-2.02-4.5-4.5-4.5z"/></svg><svg class="abs" style="left:1781px;top:909px" width="22" height="22" viewBox="0 0 22 22"><path d="M11 1 V21 M1 11 H21" stroke="#a6845a" stroke-width="2.6"/></svg><svg class="abs" style="left:1838px;top:908px" width="8" height="24" viewBox="0 0 8 24"><circle cx="4" cy="3" r="2.9" fill="#a6845a"/><circle cx="4" cy="12" r="2.9" fill="#a6845a"/><circle cx="4" cy="21" r="2.9" fill="#a6845a"/></svg><div class="abs sec" style="left:570px;top:965px;width:1314px;height:64px"></div><svg class="abs" style="left:635px;top:985px" width="14" height="24" viewBox="0 0 14 24"><path d="M3 2.5 L12.5 12 L3 21.5" fill="none" stroke="#a6845a" stroke-width="3.4"/></svg><div class="abs sect" style="left:665px;top:982px">1.5</div><div class="abs sect" style="left:716px;top:982px;letter-spacing:-0.76px">QUALITY ASSURANCE</div><svg class="abs" style="left:1725px;top:979px" width="34" height="34" viewBox="0 0 24 24"><path fill="#a6845a" d="M12 6.5c3.79 0 7.17 2.13 8.82 5.5-1.65 3.37-5.02 5.5-8.82 5.5S4.83 15.37 3.18 12C4.830 8.63 8.21 6.5 12 6.5m0-2C7 4.5 2.73 7.61 1 12c1.73 4.39 6 7.5 11 7.5s9.27-3.11 11-7.5c-1.73-4.39-6-7.5-11-7.5zm0 5c1.38 0 2.5 1.12 2.5 2.5s-1.12 2.5-2.5 2.5-2.5-1.12-2.5-2.5 1.12-2.5 2.5-2.5m0-2c-2.48 0-4.5 2.02-4.5 4.5s2.02 4.5 4.5 4.5 4.5-2.02 4.5-4.5-2.02-4.5-4.5-4.5z"/></svg><svg class="abs" style="left:1781px;top:986px" width="22" height="22" viewBox="0 0 22 22"><path d="M11 1 V21 M1 11 H21" stroke="#a6845a" stroke-width="2.6"/></svg><svg class="abs" style="left:1838px;top:985px" width="8" height="24" viewBox="0 0 8 24"><circle cx="4" cy="3" r="2.9" fill="#a6845a"/><circle cx="4" cy="12" r="2.9" fill="#a6845a"/><circle cx="4" cy="21" r="2.9" fill="#a6845a"/></svg><div class="abs sec" style="left:570px;top:1042px;width:1314px;height:64px"></div><svg class="abs" style="left:635px;top:1062px" width="14" height="24" viewBox="0 0 14 24"><path d="M3 2.5 L12.5 12 L3 21.5" fill="none" stroke="#a6845a" stroke-width="3.4"/></svg><div class="abs sect" style="left:665px;top:1059px">1.6</div><div class="abs sect" style="left:716px;top:1059px;letter-spacing:-0.92px">MOCKUPS</div><svg class="abs" style="left:1725px;top:1056px" width="34" height="34" viewBox="0 0 24 24"><path fill="#a6845a" d="M12 6.5c3.79 0 7.17 2.13 8.82 5.5-1.65 3.37-5.02 5.5-8.82 5.5S4.83 15.37 3.18 12C4.830 8.63 8.21 6.5 12 6.5m0-2C7 4.5 2.73 7.61 1 12c1.73 4.39 6 7.5 11 7.5s9.27-3.11 11-7.5c-1.73-4.39-6-7.5-11-7.5zm0 5c1.38 0 2.5 1.12 2.5 2.5s-1.12 2.5-2.5 2.5-2.5-1.12-2.5-2.5 1.12-2.5 2.5-2.5m0-2c-2.48 0-4.5 2.02-4.5 4.5s2.02 4.5 4.5 4.5 4.5-2.02 4.5-4.5-2.02-4.5-4.5-4.5z"/></svg><svg class="abs" style="left:1781px;top:1063px" width="22" height="22" viewBox="0 0 22 22"><path d="M11 1 V21 M1 11 H21" stroke="#a6845a" stroke-width="2.6"/></svg><svg class="abs" style="left:1838px;top:1062px" width="8" height="24" viewBox="0 0 8 24"><circle cx="4" cy="3" r="2.9" fill="#a6845a"/><circle cx="4" cy="12" r="2.9" fill="#a6845a"/><circle cx="4" cy="21" r="2.9" fill="#a6845a"/></svg><div class="abs sec" style="left:570px;top:1129px;width:1314px;height:64px"></div><svg class="abs" style="left:635px;top:1149px" width="14" height="24" viewBox="0 0 14 24"><path d="M3 2.5 L12.5 12 L3 21.5" fill="none" stroke="#a6845a" stroke-width="3.4"/></svg><div class="abs" style="left:665px;top:1171px;width:12px;height:2.5px;background:#eadfd4"></div><div class="abs" style="left:680px;top:1168px;width:2.6px;height:2.6px;border-radius:1.3px;background:#eadfd4"></div><div class="abs" style="left:685px;top:1171px;width:13px;height:2.5px;background:#eadfd4"></div><div class="abs sect" style="left:719px;top:1146px;color:#eadfd4;letter-spacing:-0.77px">DELIVERY, STORAGE, AND HANDLING</div><svg class="abs" style="left:603px;top:1122px" width="32" height="32" viewBox="0 0 32 32"><circle cx="15.8" cy="16.8" r="13.3" fill="#fff" stroke="#b9a38a" stroke-width="2.8"/><path d="M16.5 7.2 L10.4 18.8 H15.1 V26.4 L21.2 15.1 H16.4 Z" fill="#b9a38a"/></svg><svg class="abs" style="left:1725px;top:1144px" width="34" height="34" viewBox="0 0 24 24"><path fill="#a6845a" d="M12 7c2.76 0 5 2.24 5 5 0 .65-.13 1.26-.36 1.83l2.92 2.920c1.51-1.26 2.7-2.89 3.43-4.75-1.73-4.39-6-7.5-11-7.5-1.4 0-2.74.25-3.98.7l2.160 2.160C10.74 7.13 11.35 7 12 7zM2 4.27l2.28 2.280.46.46C3.08 8.3 1.78 10.02 1 12c1.73 4.39 6 7.5 11 7.5 1.55 0 3.03-.3 4.38-.84l.42.42L19.73 22 21 20.73 3.27 3 2 4.27zM7.53 9.8l1.55 1.55c-.05.21-.08.43-.08.65 0 1.66 1.34 3 3 3 .22 0 .44-.03.65-.08l1.55 1.55c-.67.33-1.41.53-2.2.53-2.76 0-5-2.240-5-5 0-.79.2-1.53.53-2.2zm4.31-.78l3.15 3.15.02-.16c0-1.66-1.34-3-3-3l-.17.01z"/></svg><svg class="abs" style="left:1781px;top:1150px" width="22" height="22" viewBox="0 0 22 22"><path d="M11 1 V21 M1 11 H21" stroke="#a6845a" stroke-width="2.6"/></svg><svg class="abs" style="left:1838px;top:1149px" width="8" height="24" viewBox="0 0 8 24"><circle cx="4" cy="3" r="2.9" fill="#a6845a"/><circle cx="4" cy="12" r="2.9" fill="#a6845a"/><circle cx="4" cy="21" r="2.9" fill="#a6845a"/></svg><div class="abs sec" style="left:570px;top:1206px;width:1314px;height:64px"></div></div>
 <div class="abs" style="left:1892px;top:486px;width:10px;height:724px;background:#fff"></div>
 <svg class="abs" style="left:1893px;top:487px" width="8" height="6" viewBox="0 0 8 6"><path d="M0 5 L4 1 L8 5Z" fill="#a0a0a0"/></svg>
 <div class="abs" style="left:1893px;top:498px;width:9px;height:639px;background:#a0a0a0"></div>
 <svg class="abs" style="left:1893px;top:1201px" width="8" height="6" viewBox="0 0 8 6"><path d="M0 1 L4 5 L8 1Z" fill="#a0a0a0"/></svg>
</div>
<div id="dela">
 <div class="abs" style="left:1935px;top:367px;width:640px;height:864px;border:1px solid #d6d6d6;border-radius:8px;background:#fff;box-shadow:-2px 1px 4px rgba(0,0,0,.12)"></div>
 <div class="abs" style="left:1991px;top:368px;width:1px;height:862px;background:#d9d9d9"></div>
 <div class="abs" style="left:1992px;top:367px;width:568px;height:76px;background:#5a4ffa;box-shadow:0 3px 6px rgba(0,0,0,.28)"></div>
 <div class="abs" style="left:2017px;top:390px;font-size:25px;font-weight:bold;color:#fff;line-height:30px;letter-spacing:-0.7px">Ask Dela</div>
 <svg class="abs" style="left:2417px;top:393px" width="24" height="24" viewBox="0 0 24 24"><circle cx="12" cy="12" r="10" fill="none" stroke="#fff" stroke-width="2"/><circle cx="12" cy="7.5" r="1.5" fill="#fff"/><rect x="10.8" y="10.5" width="2.4" height="7.5" fill="#fff"/></svg>
 <div class="abs" style="left:2453px;top:393px;font-size:20px;color:#fff;line-height:24px;letter-spacing:-0.6px;-webkit-text-stroke:0.4px #fff">Disclaimer</div>
 <svg class="abs" style="left:1938px;top:448px" width="52" height="120" viewBox="0 0 52 120"><g fill="none" stroke="#2d4354" stroke-width="2.9"><path d="M8.7 42.5 V11.5 A2 2 0 0 1 10.7 9.5 H40 A2 2 0 0 1 42 11.5 V24.7"/><path d="M8.7 42.5 L14 35.3 H25"/><path d="M29 33.8 L34.4 39.2 L43.2 30"/><circle cx="17.4" cy="86.6" r="4.3"/><path d="M26.8 86.6 H38.8"/><path d="M14 101.2 H26.6"/><circle cx="35.3" cy="100.7" r="4.3"/></g></svg>
 
 <div class="abs" style="left:2021px;top:461px;width:450px;height:116px;border:1px solid #dadada;border-radius:12px;background:#fff"></div>
 <div class="abs" style="left:2039px;top:479px;width:430px;font-size:18.7px;color:#111;line-height:26.7px;letter-spacing:-0.1px">cite advantage, disadvantage, price, properties,<br>and description of wood, concrete, and metal in<br>table format</div>
 <div class="abs" style="left:2484px;top:461px;width:50px;height:50px;border-radius:25px;background:#b9ccd8;color:#1b1b1b;font-size:21px;text-align:center;line-height:50px">AA</div>
 <svg class="abs" style="left:2005px;top:603px" width="50" height="50" viewBox="0 0 50 50"><defs><linearGradient id="dg" x1="0.1" y1="0.1" x2="0.9" y2="0.9"><stop offset="0" stop-color="#1aaaf2"/><stop offset=".5" stop-color="#6a48f2"/><stop offset="1" stop-color="#c01cf0"/></linearGradient><radialGradient id="dw" cx=".45" cy=".5" r=".6"><stop offset="0" stop-color="#e2e2e6"/><stop offset="1" stop-color="#fdfdfd"/></radialGradient></defs><circle cx="25" cy="25" r="25" fill="url(#dg)"/><path d="M12.4 4 H24.8 L38.8 17.3 V32.5 L24.8 45.8 H12.4 V33.3 L20.2 24.8 L12.4 16.5 Z" fill="url(#dw)"/></svg>
 <div class="abs" style="left:2067px;top:603px;width:450px;height:537px;border-radius:0 16px 0 0;background:#5a4ffa;overflow:hidden">
  <div class="abs" style="left:17px;top:16px;width:430px;font-size:18.7px;color:#fff;line-height:27px;letter-spacing:0px">Based on the provided document text, here is a<br>table summarizing the advantages,<br>disadvantages, price, properties, and descriptions<br>of wood, concrete, and metal:</div>
  <div class="abs" style="left:17px;top:125px;width:418px;height:420px;overflow:hidden">
   <div class="abs tl" style="left:0;top:0;width:1px;height:420px"></div>
   <div class="abs tl" style="left:80px;top:0;width:1px;height:420px"></div>
   <div class="abs tl" style="left:230px;top:0;width:1px;height:420px"></div>
   <div class="abs tl" style="left:380px;top:0;width:1px;height:420px"></div>
   <div class="abs tl" style="left:0;top:0;width:418px;height:1px"></div>
   <div class="abs tl" style="left:0;top:31px;width:418px;height:1px"></div>
   <div class="abs tl" style="left:0;top:330px;width:418px;height:1px"></div>
   <div class="abs th" style="left:3px;top:2px">Material</div>
   <div class="abs th" style="left:83px;top:2px">Advantages</div>
   <div class="abs th" style="left:233px;top:2px">Disadvantages</div>
   <div class="abs th" style="left:383px;top:2px">Price</div>
   <div class="abs td" style="left:3px;top:165px">Wood</div>
   <div class="abs td" style="left:120px;top:51px">Higher<br>thermal<br>resistance<br>than<br>aluminum<br>Aesthetic<br>appeal<br>Renewable<br>resource</div>
   <div class="abs bul" style="left:101px;top:62px"></div>
   <div class="abs bul" style="left:101px;top:197px"></div>
   <div class="abs bul" style="left:101px;top:251px"></div>
   <div class="abs td" style="left:270px;top:64px">Potential<br>deterioration<br>from<br>moisture<br>Requires<br>regular<br>maintenance<br>if painted</div>
   <div class="abs bul" style="left:251px;top:75px"></div>
   <div class="abs bul" style="left:251px;top:183px"></div>
   <div class="abs td" style="left:382px;top:111px">Various<br>based<br>species<br>and<br>treatment</div>
   <div class="abs td" style="left:270px;top:363px">Heavy and<br>requires</div>
   <div class="abs bul" style="left:251px;top:374px"></div>
   <div class="abs td" style="left:120px;top:403px">Higher</div>
  </div>
 </div>
 <div class="abs" style="left:2547px;top:447px;width:11px;height:695px;background:#fff"></div>
 <svg class="abs" style="left:2548px;top:449px" width="9" height="6" viewBox="0 0 9 6"><path d="M0 5 L4.5 1 L9 5Z" fill="#a0a0a0"/></svg>
 <div class="abs" style="left:2548.5px;top:616px;width:9px;height:222px;background:#a0a0a0"></div>
 <svg class="abs" style="left:2548px;top:1129px" width="9" height="6" viewBox="0 0 9 6"><path d="M0 1 L4.5 5 L9 1Z" fill="#a0a0a0"/></svg>
 <div class="abs" style="left:2008px;top:1156px;width:536px;height:59px;border:1px solid #c6c6c6;border-radius:30px;background:#fff"></div>
 <div class="abs" style="left:2043px;top:1172px;font-size:22px;color:#9a9a9a;line-height:26px;letter-spacing:-0.4px">Ask Dela...</div>
 <svg class="abs" style="left:2498px;top:1173px" width="28" height="24" viewBox="0 0 28 24"><path d="M2 2 L26 12 L2 22 L6 12 Z M6 12 H14" fill="none" stroke="#222" stroke-width="2.4" stroke-linejoin="round"/></svg>
 <svg class="abs" style="left:1944px;top:1162px" width="40" height="40" viewBox="0 0 40 40"><defs><linearGradient id="dl" x1="0" y1="1" x2="1" y2="0"><stop offset="0" stop-color="#6b2a9e"/><stop offset=".45" stop-color="#4c3fb8"/><stop offset="1" stop-color="#0aa6dc"/></linearGradient></defs><ellipse cx="19.5" cy="19.2" rx="18.5" ry="17.3" fill="url(#dl)"/><path d="M9.5 30 L5.2 36.5 Q4.8 38 6.6 37.6 L15 34.5 Z" fill="#5e2c9e"/><g stroke="#8fb8f0" stroke-opacity=".35" stroke-width=".8" fill="none"><ellipse cx="19.5" cy="19.2" rx="12" ry="15"/><path d="M1 19.2 H38 M19.5 2 V36.5 M4 10 H35 M4 28.5 H35"/></g><path d="M11.5 9.8 H20 A9.5 9.45 0 0 1 20 28.7 H11.5 Z" fill="#fff"/><path d="M17 14.2 H21 A4.6 5 0 0 1 21 24.2 H17 Z" fill="#4b4fc4"/></svg>
 <div class="abs" style="left:1920px;top:775px;width:30px;height:48px;border-radius:8px;background:#fff;box-shadow:0 1px 4px rgba(0,0,0,.2)"></div>
 <svg class="abs" style="left:1926px;top:790px" width="18" height="18" viewBox="0 0 18 18"><path d="M2 3 L8 9 L2 15 M9 3 L15 9 L9 15" fill="none" stroke="#123a5e" stroke-width="3.2"/></svg>
</div>
</body></html>
